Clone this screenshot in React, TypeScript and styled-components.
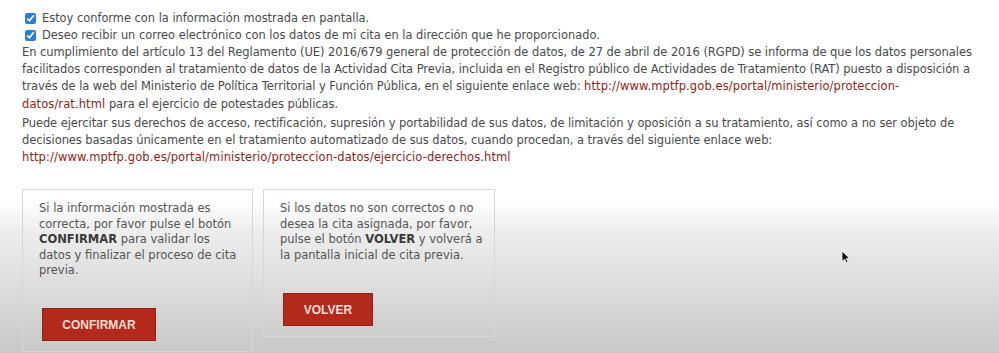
import React from 'react';
import styled, { createGlobalStyle } from 'styled-components';

// ─── Global ────────────────────────────────────────────────────────────────────
const GlobalStyle = createGlobalStyle`
  html, body {
    margin: 0;
    padding: 0;
    height: 100%;
  }
  body {
    font-family: "DejaVu Sans", "Noto Sans", sans-serif;
    color: #4a4a4a;
    background: linear-gradient(
      to bottom,
      #ffffff 0,
      #ffffff 200px,
      #eeeeee 230px,
      #dedede 282px,
      #c8c8c8 353px
    );
    background-attachment: fixed;
    overflow: hidden;
  }
`;

// ─── Layout ────────────────────────────────────────────────────────────────────
const Page = styled.main`
  position: relative;
  height: 353px;
  padding: 10px 0 0 22px;
  box-sizing: border-box;
  font-size: 11.4px;
  line-height: 17.2px;
`;

const CheckRow = styled.label`
  display: flex;
  align-items: center;
  gap: 6px;
  height: 17px;
`;

const Check = styled.input.attrs({ type: 'checkbox' })`
  width: 11px;
  height: 11px;
  margin: 0 0 0 3px;
  accent-color: #2b7ce0;
`;

const Legal = styled.p`
  margin: 0 0 2px;
  white-space: nowrap;
  font-size: 11.5px;
  letter-spacing: -0.07px;
`;

const Link = styled.a`
  color: #8e2318;
  text-decoration: none;
  letter-spacing: 0.1px;
`;

const Actions = styled.div`
  display: flex;
  align-items: flex-start;
  gap: 10px;
  margin-top: 23px;
`;

const Panel = styled.section<{ $width: number }>`
  width: ${(p) => p.$width}px;
  box-sizing: border-box;
  border: 1px solid #d6d6d6;
  padding: 11px 10px 10px 16px;
  font-size: 11.5px;
  line-height: 15.4px;
  color: #555555;
`;

const PanelText = styled.p<{ $gap: number }>`
  margin: 0 0 ${(p) => p.$gap}px;
  b {
    color: #3a3a3a;
  }
`;

const ActionButton = styled.button<{ $width: number }>`
  width: ${(p) => p.$width}px;
  height: 33px;
  margin-left: 3px;
  border: 1px solid #8f2216;
  background: #b3291b;
  color: #efdcd5;
  font-family: "Liberation Sans", Arial, sans-serif;
  font-size: 12px;
  font-weight: 700;
  text-transform: uppercase;
  cursor: pointer;
`;

const Cursor = styled.svg`
  position: absolute;
  left: 841px;
  top: 250px;
  width: 10px;
  height: 14px;
`;

// ─── Component ────────────────────────────────────────────────────────────────
export default function App() {
  return (
    <>
      <GlobalStyle />
      <Page>
        <CheckRow>
          <Check defaultChecked />
          Estoy conforme con la información mostrada en pantalla.
        </CheckRow>
        <CheckRow>
          <Check defaultChecked />
          Deseo recibir un correo electrónico con los datos de mi cita en la dirección que he proporcionado.
        </CheckRow>

        <Legal>
          En cumplimiento del artículo 13 del Reglamento (UE) 2016/679 general de protección de datos, de 27 de abril
          de 2016 (RGPD) se informa de que los datos personales
          <br />
          facilitados corresponden al tratamiento de datos de la Actividad Cita Previa, incluida en el Registro público
          de Actividades de Tratamiento (RAT) puesto a disposición a
          <br />
          través de la web del Ministerio de Política Territorial y Función Pública, en el siguiente enlace web:{' '}
          <Link href="#">
            http://www.mptfp.gob.es/portal/ministerio/proteccion-
            <br />
            datos/rat.html
          </Link>{' '}
          para el ejercicio de potestades públicas.
        </Legal>
        <Legal>
          Puede ejercitar sus derechos de acceso, rectificación, supresión y portabilidad de sus datos, de limitación y
          oposición a su tratamiento, así como a no ser objeto de
          <br />
          decisiones basadas únicamente en el tratamiento automatizado de sus datos, cuando procedan, a través del
          siguiente enlace web:
          <br />
          <Link href="#">http://www.mptfp.gob.es/portal/ministerio/proteccion-datos/ejercicio-derechos.html</Link>
        </Legal>

        <Actions>
          <Panel $width={231}>
            <PanelText $gap={30}>
              Si la información mostrada es correcta, por favor pulse el botón <b>CONFIRMAR</b> para validar los datos
              y finalizar el proceso de cita previa.
            </PanelText>
            <ActionButton $width={114}>Confirmar</ActionButton>
          </Panel>
          <Panel $width={232}>
            <PanelText $gap={30}>
              Si los datos no son correctos o no desea la cita asignada, por favor, pulse el botón <b>VOLVER</b> y
              volverá a la pantalla inicial de cita previa.
            </PanelText>
            <ActionButton $width={90}>Volver</ActionButton>
          </Panel>
        </Actions>

        <Cursor viewBox="0 0 10 14">
          <path d="M1 1 L1 11.5 L3.6 9.2 L5.4 13 L7 12.3 L5.3 8.6 L8.6 8.4 Z" fill="#111" stroke="#fff" strokeWidth="0.8" />
        </Cursor>
      </Page>
    </>
  );
}
